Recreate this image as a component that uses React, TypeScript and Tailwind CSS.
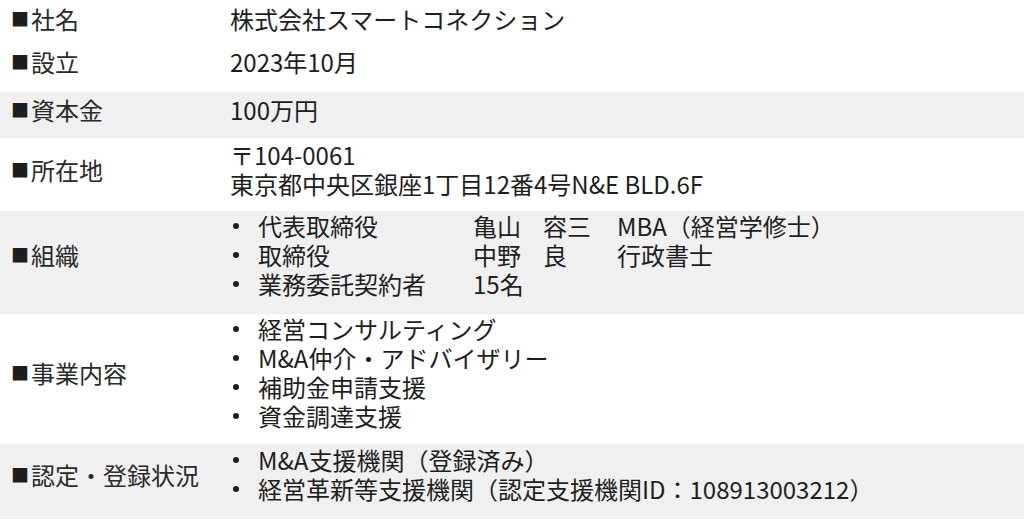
import React from 'react';

type Row = {
  label: string;
  gray: boolean;
  pad: string;
  body: React.ReactNode;
};

const Dot: React.FC = () => (
  <span className="w-[28px] shrink-0 flex items-center">
    <span className="ml-[3px] w-[6px] h-[6px] rounded-full bg-[#1e1e1e]" />
  </span>
);

const Bullets: React.FC<{ items: string[] }> = ({ items }) => (
  <ul className="flex flex-col">
    {items.map((t) => (
      <li key={t} className="flex items-center">
        <Dot />
        <span>{t}</span>
      </li>
    ))}
  </ul>
);

const staff = [
  ['代表取締役', '亀山', '容三', 'MBA（経営学修士）'],
  ['取締役', '中野', '良', '行政書士'],
  ['業務委託契約者', '15名', '', ''],
];

const rows: Row[] = [
  { label: '社名', gray: false, pad: 'pt-[4px] pb-[9px]', body: '株式会社スマートコネクション' },
  { label: '設立', gray: false, pad: 'pt-[5px] pb-[16px]', body: '2023年10月' },
  { label: '資本金', gray: true, pad: 'pt-[3px] pb-[14px]', body: '100万円' },
  {
    label: '所在地',
    gray: false,
    pad: 'pt-[2px] pb-[13px]',
    body: (
      <>
        <div>〒104-0061</div>
        <div>東京都中央区銀座1丁目12番4号N&amp;E BLD.6F</div>
      </>
    ),
  },
  {
    label: '組織',
    gray: true,
    pad: 'pt-0 pb-[16px]',
    body: (
      <div className="flex flex-col">
        {staff.map(([role, a, b, c]) => (
          <div key={role} className="flex items-center">
            <Dot />
            <div className="grid grid-cols-[215px_70px_74px_auto]">
              <span>{role}</span>
              <span>{a}</span>
              <span>{b}</span>
              <span>{c}</span>
            </div>
          </div>
        ))}
      </div>
    ),
  },
  {
    label: '事業内容',
    gray: false,
    pad: 'pt-0 pb-[14px]',
    body: <Bullets items={['経営コンサルティング', 'M&A仲介・アドバイザリー', '補助金申請支援', '資金調達支援']} />,
  },
  {
    label: '認定・登録状況',
    gray: true,
    pad: 'pt-[1px] pb-[16px]',
    body: <Bullets items={['M&A支援機関（登録済み）', '経営革新等支援機関（認定支援機関ID：108913003212）']} />,
  },
];

export default function App() {
  return (
    <div className="w-[1024px] h-[525px] overflow-hidden bg-white text-[#1e1e1e] text-[24px] leading-[29px] font-['Noto_Sans_CJK_JP','Noto_Sans',sans-serif]">
      {rows.map((r) => (
        <div key={r.label} className={`flex ${r.gray ? 'bg-[#f0f0f0]' : 'bg-white'} ${r.pad}`}>
          <div className="w-[230px] shrink-0 pl-[12px] flex items-center">
            <span className="w-[20px] text-[18px] leading-[29px] -ml-[1px]">■</span>
            <span className="text-[#2a2a2a]">{r.label}</span>
          </div>
          <div className="flex-1">{r.body}</div>
        </div>
      ))}
    </div>
  );
}
